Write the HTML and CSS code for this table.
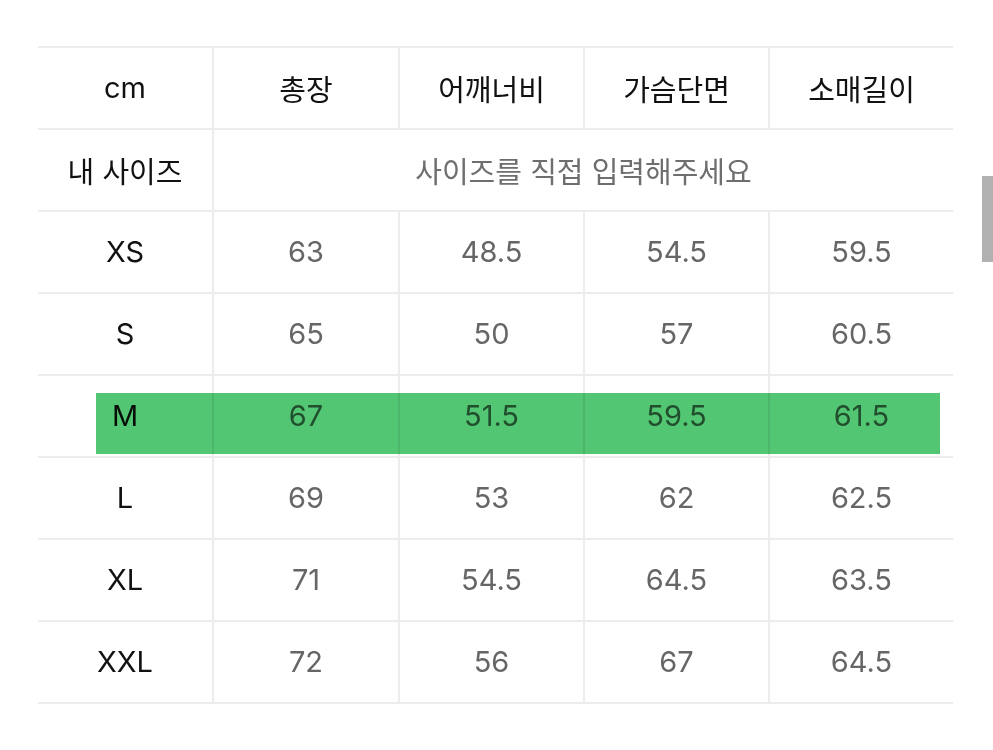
FILE: index.html
```html
<!DOCTYPE html>
<html lang="ko">
<head>
<meta charset="utf-8">
<link rel="stylesheet" href="styles.css">
</head>
<body>
<div class="page">
  <div class="size-table">
    <div class="cell head">cm</div>
    <div class="cell head">총장</div>
    <div class="cell head">어깨너비</div>
    <div class="cell head">가슴단면</div>
    <div class="cell head last">소매길이</div>

    <div class="cell head">내 사이즈</div>
    <div class="cell hint span4 last">사이즈를 직접 입력해주세요</div>

    <div class="cell head">XS</div>
    <div class="cell">63</div><div class="cell">48.5</div><div class="cell">54.5</div><div class="cell last">59.5</div>

    <div class="cell head">S</div>
    <div class="cell">65</div><div class="cell">50</div><div class="cell">57</div><div class="cell last">60.5</div>

    <div class="cell head">M</div>
    <div class="cell">67</div><div class="cell">51.5</div><div class="cell">59.5</div><div class="cell last">61.5</div>

    <div class="cell head">L</div>
    <div class="cell">69</div><div class="cell">53</div><div class="cell">62</div><div class="cell last">62.5</div>

    <div class="cell head">XL</div>
    <div class="cell">71</div><div class="cell">54.5</div><div class="cell">64.5</div><div class="cell last">63.5</div>

    <div class="cell head">XXL</div>
    <div class="cell">72</div><div class="cell">56</div><div class="cell">67</div><div class="cell last">64.5</div>

    <div class="highlight"></div>
  </div>
</div>
<div class="scrollbar"></div>
</body>
</html>
```
FILE: styles.css
```css
html, body {
  margin: 0;
  padding: 0;
  background: #ffffff;
}
body {
  font-family: "Inter", "Noto Sans CJK KR", sans-serif;
  width: 993px;
  height: 750px;
  overflow: hidden;
  position: relative;
}
.page {
  padding: 46px 40px 0 38px;
}
.size-table {
  position: relative;
  display: grid;
  grid-template-columns: 176px 186px 185px 185px 183px;
  grid-auto-rows: 82px;
  border-top: 2px solid #ececec;
  width: 915px;
}
.cell {
  box-sizing: border-box;
  display: flex;
  align-items: center;
  justify-content: center;
  border-bottom: 2px solid #ececec;
  border-right: 2px solid #ececec;
  font-size: 29px;
  color: #666666;
  padding-bottom: 1px;
}
.cell.last {
  border-right: none;
}
.cell.head {
  color: #111111;
}
.cell.hint {
  color: #6e6e6e;
  font-size: 29px;
}
.span4 {
  grid-column: span 4;
}
.highlight {
  position: absolute;
  left: 58px;
  top: 345px;
  width: 844px;
  height: 61px;
  background: #52c672;
  mix-blend-mode: multiply;
}
.scrollbar {
  position: absolute;
  right: 0;
  top: 176px;
  width: 11px;
  height: 86px;
  background: #b1b1b1;
}
```
